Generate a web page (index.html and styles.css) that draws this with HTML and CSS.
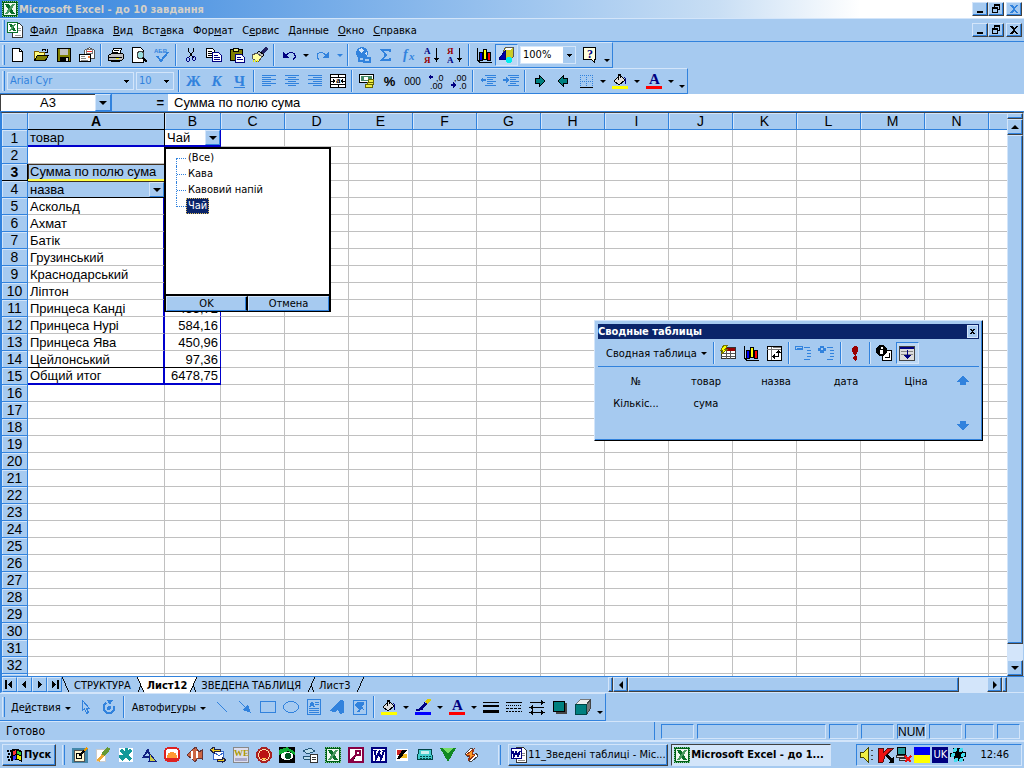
FILE: index.html
```html
<!DOCTYPE html>
<html lang="uk">

<head>
    <meta charset="UTF-8">
    <meta name="viewport" content="width=device-width, initial-scale=1.0">
    <title>Microsoft Excel - до 10 завдання</title>
    <link rel="stylesheet" href="styles.css">
</head>

<body>

    <!-- Icon sprite -->
    <svg class="sprite">
        <symbol id="excel" viewBox="0 0 16 16"><path fill="#006018" d="M0 0h16v16H0z"/><path fill="none" stroke="#8c9" stroke-dasharray="1" d="M.5.500h15v15H.5z"/><path fill="#f0f8f0" d="M2 2h12v12H2z"/><path fill="#087028" d="M3 3h4l6 10H9z"/><path fill="#4a9a60" d="M10 3h3L6 13H3z"/></symbol>
        <symbol id="book" viewBox="0 0 16 16"><path fill="#fff" stroke="#333" d="M5.500 1.500h7l3 3v11h-10z"/><path stroke="#999" d="M11 6.500h3M11 8.500h3M8 13.500h6"/><path fill="#fff" stroke="#087028" d="M.5.500h10v10H.5z"/><path fill="#087028" d="M2 2h3l4 7H6z"/><path fill="#4a9a60" d="M7 2h2L4 9H2z"/></symbol>
        <symbol id="word" viewBox="0 0 16 16"><path fill="#fff" stroke="#000080" stroke-width="2" d="M1 1h14v14H1z"/><path fill="none" stroke="#000080" stroke-width="2" d="M4 4l1 8 3-7 2 7 3-8"/><path stroke="#000080" d="M2 3.500h4M7 4.500h3M11 3.500h3"/></symbol>
        <symbol id="worddoc" viewBox="0 0 16 16"><path fill="#fff" stroke="#333" d="M5.500.500h7l3 3v12h-10z"/><path stroke="#888" d="M11 6.500h3M11 8.500h3M7 13.500h7"/><path fill="#fff" stroke="#000080" d="M.5 1.500h10v10H.5z"/><path fill="none" stroke="#000080" stroke-width="2" d="M2 4l1 5 2-4 2 4 2-5"/></symbol>
        <symbol id="new" viewBox="0 0 16 16"><path fill="#fff" stroke="#000" d="M2.500 1.500h7l3 3v10h-10z"/><path fill="none" stroke="#000" d="M9.500 1.500v3h3"/></symbol>
        <symbol id="open" viewBox="0 0 16 16"><path fill="#ffff80" stroke="#806000" d="M1.500 13.500v-9h4l1 1h5v3"/><path fill="#808000" stroke="#000" d="M1.500 13.500l3-5h11l-3 5z"/><path fill="none" stroke="#000" d="M9 3.500q2-3 4 0M14.500 2v3h-3"/></symbol>
        <symbol id="save" viewBox="0 0 16 16"><path fill="#808000" stroke="#000" d="M1.500 1.500h13v13h-13z"/><path fill="#c0c0c0" d="M4 2h8v6H4z"/><path d="M4 10h9v4H4z"/><path fill="#ddd" d="M10 11h2v3h-2z"/></symbol>
        <symbol id="mail" viewBox="0 0 16 16"><path fill="#fff" stroke="#555" d="M5.500 9.500v-6l5-3 5 3v8h-4z"/><path fill="#fff" stroke="#777" d="M7.500 2.500h6v4h-6z"/><path stroke="#e33" d="M8 4.500h5"/><path fill="#fff" stroke="#000" d="M.5 7.500h11v7H.5z"/><path stroke="#888" d="M2 9.500h4M2 11.500h5M2 13.500h7"/><path fill="#f08040" d="M9 9h2v2H9z"/></symbol>
        <symbol id="print" viewBox="0 0 16 16"><path fill="#fff" stroke="#000" d="M5.500 1.500h8l-2 6h-8z"/><path stroke="#000" d="M6 3.500h5M5 5.500h5"/><path fill="#c0c0c0" stroke="#000" d="M.5 8.500l3-2h11l1 1v4l-2 2h-13z"/><path stroke="#000" d="M1 10.500h13M3 14.500h9"/><path fill="#ee0" d="M8 11h3v1H8z"/></symbol>
        <symbol id="preview" viewBox="0 0 16 16"><path fill="#fff" stroke="#000" d="M1.500.500h8l3 3v12h-11z"/><circle cx="9.500" cy="8" r="3.500" fill="#9dd" stroke="#444"/><path stroke="#000" stroke-width="2" d="M12 11l4 4"/></symbol>
        <symbol id="spell" viewBox="0 0 16 16"><text x="0" y="6" class="glyph tiny" fill="#3182dd">АБВ</text><path fill="none" stroke="#3182dd" stroke-width="2" d="M3 9l4 5 7-9"/></symbol>
        <symbol id="cut" viewBox="0 0 16 16"><path fill="none" stroke="#000" d="M5.500 1v3l5 7M10.500 1v3l-5 7"/><path fill="none" stroke="#000080" d="M3.500 11.500l1-1h1l1 1v2l-1 1h-1l-1-1zM9.500 10.500l1-1h1l1 1v2l-1 1h-1l-1-1z"/></symbol>
        <symbol id="copy" viewBox="0 0 16 16"><path fill="#fff" stroke="#000" d="M.5 1.500h6l2 2v7h-8z"/><path stroke="#000" d="M2 4.500h4M2 6.500h4M2 8.500h4"/><path fill="#fff" stroke="#000080" d="M6.500 5.500h6l3 3v6h-9z"/><path stroke="#000080" d="M8 8.500h4M8 10.500h6M8 12.500h6"/></symbol>
        <symbol id="paste" viewBox="0 0 16 16"><path fill="#808000" stroke="#000" d="M1.500 2.500h12v11h-12z"/><path fill="#ee8" stroke="#000" d="M4.500 1.500h5v3h-5z"/><path fill="#fff" stroke="#000080" d="M6.500 7.500h6l3 3v5h-9z"/><path stroke="#000080" d="M8 10.500h4M8 12.500h6"/></symbol>
        <symbol id="brush" viewBox="0 0 16 16"><path stroke="#202060" stroke-width="3" d="M15 1l-5 5"/><path fill="#c0c0c0" stroke="#000" d="M7 4l5 4-2 2-5-4z"/><path fill="#ffffa0" stroke="#555" d="M5 6l5 4-4 5-5-3-1-4z"/><path stroke="#ee0" stroke-width="2" stroke-dasharray="1" d="M1 14h6"/></symbol>
        <symbol id="undo" viewBox="0 0 16 16"><path fill="none" stroke="#000080" d="M5 8.500l2-2 2-1h2l2 1 1 2v2l-2 2"/><path fill="#000080" d="M2 4v7h6z"/></symbol>
        <symbol id="redo" viewBox="0 0 16 16"><path fill="none" stroke="#3182dd" d="M11 8.500l-2-2-2-1H5l-2 1-1 2v2l2 2"/><path fill="#3182dd" d="M14 4v7H8z"/></symbol>
        <symbol id="link" viewBox="0 0 16 16"><circle cx="7" cy="6" r="6" fill="#3182dd"/><path fill="#d3e5fa" d="M3 3l4-2 2 3-3 2zM9 6l3-1v3z"/><path fill="#a6caf0" stroke="#3182dd" stroke-width="2" d="M4 10h5v4H4zM9 11h6v4H9z"/></symbol>
        <symbol id="sigma" viewBox="0 0 16 16"><path fill="none" stroke="#3182dd" stroke-width="2" d="M12 5V3H4l4 5-4 5h8v-2"/></symbol>
        <symbol id="fx" viewBox="0 0 16 16"><text x="2" y="12" class="glyph italic" fill="#3182dd">f</text><text x="8" y="13" class="glyph italic-small" fill="#3182dd">x</text></symbol>
        <symbol id="sortaz" viewBox="0 0 16 16"><text x="0" y="7" class="glyph small" fill="#000080">А</text><text x="0" y="16" class="glyph small" fill="#900">Я</text><path stroke="#000" d="M12.500 1v12"/><path d="M10 11h5l-2.500 4z"/></symbol>
        <symbol id="sortza" viewBox="0 0 16 16"><text x="0" y="7" class="glyph small" fill="#900">Я</text><text x="0" y="16" class="glyph small" fill="#000080">А</text><path stroke="#000" d="M12.500 1v12"/><path d="M10 11h5l-2.500 4z"/></symbol>
        <symbol id="chart" viewBox="0 0 16 16"><path fill="none" stroke="#000" d="M1.500 1v12l2 2h12"/><path fill="#00f" stroke="#000" d="M3.500 5.500h3v8h-3z"/><path fill="#ff0" stroke="#000" d="M7.500 2.500h3v10h-3z"/><path fill="#f00" stroke="#000" d="M11.500 5.500h3v8h-3z"/></symbol>
        <symbol id="draw" viewBox="0 0 16 16"><path fill="#cc2" stroke="#555" d="M4.500 3.500l2-3h8v9l-2 2h-8z"/><path fill="#fff" d="M5 3l2-2h6l-1 2z"/><path fill="#00a" stroke="#000080" d="M0 12l6-8v8z"/><circle cx="10" cy="13" r="3" fill="#0ee"/></symbol>
        <symbol id="help" viewBox="0 0 16 16"><path fill="#ffffe0" stroke="#000" d="M1.500.500h12v12h-1v3l-3-3h-8z"/><text x="5" y="11" class="glyph question" fill="#000080">?</text></symbol>
        <symbol id="left" viewBox="0 0 16 16"><path stroke="#3182dd" d="M1 2.500h14M1 4.500h9M1 6.500h14M1 8.500h9M1 10.500h14M1 12.500h9"/></symbol>
        <symbol id="center" viewBox="0 0 16 16"><path stroke="#3182dd" d="M1 2.500h14M4 4.500h8M1 6.500h14M4 8.500h8M1 10.500h14M4 12.500h8"/></symbol>
        <symbol id="right" viewBox="0 0 16 16"><path stroke="#3182dd" d="M1 2.500h14M6 4.500h9M1 6.500h14M6 8.500h9M1 10.500h14M6 12.500h9"/></symbol>
        <symbol id="merge" viewBox="0 0 16 16"><path fill="#fff" stroke="#000" d="M.5 1.500h15v13H.5z"/><path fill="none" stroke="#000" d="M0 4.500h16M0 11.500h16M8.500 1v3M8.500 12v3M1 8h4M11 8h4"/><path d="M3 6l3 2-3 2zM13 6l-3 2 3 2z"/><text x="6" y="10" class="glyph small" fill="#000">a</text></symbol>
        <symbol id="money" viewBox="0 0 16 16"><path fill="#fff" stroke="#000" d="M.5 1.500h14v8H.5z"/><path fill="#486" d="M2 3h11v5H2z"/><circle cx="7" cy="5.500" r="2" fill="#fff"/><path fill="#ee4" stroke="#660" d="M9.500 6.500h5v3h-5zM8.500 9.500h6v2h-6zM6.500 11.500h7v3h-7z"/></symbol>
        <symbol id="decinc" viewBox="0 0 16 16"><path fill="#000080" d="M0 4l3-3v2h2v2H3v2z"/><text x="8" y="8" class="glyph digits" fill="#000">,0</text><text x="2" y="16" class="glyph digits" fill="#000">,00</text></symbol>
        <symbol id="decdec" viewBox="0 0 16 16"><text x="3" y="8" class="glyph digits" fill="#000">,00</text><text x="8" y="16" class="glyph digits" fill="#000">,0</text><path fill="#000080" d="M5 12L2 9v2H0v2h2v2z"/></symbol>
        <symbol id="outdent" viewBox="0 0 16 16"><path stroke="#3182dd" d="M5 2.500h11M7 4.500h9M7 6.500h6M7 8.500h9M7 10.500h6M5 12.500h11"/><path fill="#3182dd" d="M0 7l3-3v2h3v2H3v2z"/></symbol>
        <symbol id="indent" viewBox="0 0 16 16"><path stroke="#3182dd" d="M5 2.500h11M7 4.500h9M7 6.500h6M7 8.500h9M7 10.500h6M5 12.500h11"/><path fill="#3182dd" d="M6 7L3 4v2H0v2h3v2z"/></symbol>
        <symbol id="fwd" viewBox="0 0 16 16"><path fill="#008080" stroke="#000" d="M3.500 5.500h4v-3L13 8l-5.500 5.500v-3h-4z"/></symbol>
        <symbol id="back" viewBox="0 0 16 16"><path fill="#008080" stroke="#000" d="M12.500 5.500h-4v-3L3 8l5.500 5.500v-3h4z"/></symbol>
        <symbol id="borders" viewBox="0 0 16 16"><path fill="none" stroke="#3182dd" stroke-dasharray="1" d="M2.500 2v12M8.500 2v12M14.500 2v12M2 2.500h13M2 8.500h13"/><path stroke="#000" d="M2 14.500h13"/></symbol>
        <symbol id="fill" viewBox="0 0 16 16"><path fill="#ddd" stroke="#000" d="M2 8l6-6 5 5-6 5z"/><path fill="none" stroke="#000" d="M6.500 7V1.500h2V5"/><path fill="#000080" d="M10 3q6 1 4 8-2-1-1-5z"/><path fill="#ff0" d="M0 13h16v3H0z"/></symbol>
        <symbol id="pen" viewBox="0 0 16 16"><path stroke="#000080" stroke-width="3" d="M11 4l-5 6"/><path stroke="#dc0" stroke-width="3" d="M15 0l-4 4"/><path fill="none" stroke="#000080" stroke-width="2" d="M1 11h3l3-2"/><path fill="#00f" d="M0 13h16v3H0z"/></symbol>
        <symbol id="fontcolor" viewBox="0 0 16 16"><text x="3" y="11" class="glyph big" fill="#000080">A</text><path fill="#f00" d="M0 13h16v3H0z"/></symbol>
        <symbol id="pivot" viewBox="0 0 16 16"><path fill="#fff" stroke="#333" d="M1.500 5.500l3-3h11v11h-14z"/><path fill="#900" d="M6 3h9v3H6z"/><path stroke="#555" d="M1 8.500h14M1 11.500h14M6.500 6v8M10.500 6v8"/><path fill="#ff0" stroke="#770" d="M4 0h4L5 4h3l-7 5 2-4H1z"/></symbol>
        <symbol id="layout" viewBox="0 0 16 16"><path fill="#fff" stroke="#000" d="M1.500 1.500h14v14h-14z"/><path stroke="#777" d="M1 4.500h14M5.500 2v13M7 2.500h8"/><path fill="none" stroke="#000" d="M7.500 11.500h5V6"/><path d="M6 11.500l3-3v6zM12.500 5l-3 3h6z"/></symbol>
        <symbol id="hide" viewBox="0 0 16 16"><path fill="none" stroke="#3182dd" d="M.5 1.500h7v3h-7zM2 3.500h5M9 2.500h6M11.500 5.500h4M11.500 8.500h4M11.500 11.500h4M9 14.500h6"/></symbol>
        <symbol id="show" viewBox="0 0 16 16"><path fill="none" stroke="#3182dd" d="M9 2.500h6M11.500 5.500h4M11.500 8.500h4M11.500 11.500h4M9 14.500h6"/><path fill="#3182dd" d="M0 3h2V1h4v2h2v3H6v2H2V6H0z"/><path fill="#a6caf0" d="M3 3h2v2H3z"/></symbol>
        <symbol id="refresh" viewBox="0 0 16 16"><path fill="#900" d="M5 3l2-2h2l2 2v3l-2 4H7L5 6zM6 12l2-2 2 2v2l-2 2-2-2z"/></symbol>
        <symbol id="field" viewBox="0 0 16 16"><path fill="#fff" stroke="#000" d="M6.500 5.500h9v10h-9z"/><path fill="none" stroke="#000" d="M9 12.500h4V8"/><circle cx="5.500" cy="5.500" r="5.500"/><path fill="#fff" d="M5 2h2v2H5zM4 5h3v4H4z"/></symbol>
        <symbol id="fields" viewBox="0 0 16 16"><path fill="#ddd" stroke="#444" d="M.5 1.500h15v14H.5z"/><path fill="#000080" d="M1 2h14v2H1z"/><path stroke="#888" d="M2 6.500h12M2 9.500h12"/><path stroke="#000080" d="M8.500 5v8"/><path fill="#000080" d="M5 10h7l-3.500 4z"/></symbol>
        <symbol id="pointer" viewBox="0 0 16 16"><path fill="none" stroke="#3182dd" d="M4.500 1.500v10l2-2 2 5 2-1-2-4h3z"/></symbol>
        <symbol id="rotate" viewBox="0 0 16 16"><path fill="none" stroke="#3182dd" stroke-width="2" d="M5 4L3 6v5l3 3h4l3-3V7"/><circle cx="8" cy="9" r="2" fill="#3182dd"/><path fill="#3182dd" d="M6 1h6l-3 5z"/></symbol>
        <symbol id="line" viewBox="0 0 16 16"><path stroke="#3182dd" d="M3 3l10 10"/></symbol>
        <symbol id="arrow" viewBox="0 0 16 16"><path stroke="#3182dd" d="M2 2l8 8"/><path fill="#3182dd" d="M14 14L6 11l5-6z"/></symbol>
        <symbol id="rect" viewBox="0 0 16 16"><path fill="none" stroke="#3182dd" d="M.5 2.500h15v11H.5z"/></symbol>
        <symbol id="oval" viewBox="0 0 16 16"><ellipse cx="8" cy="8" rx="7.500" ry="5.500" fill="none" stroke="#3182dd"/></symbol>
        <symbol id="textbox" viewBox="0 0 16 16"><path fill="none" stroke="#3182dd" d="M1.500.500h13v15h-13zM9 3.500h4M9 5.500h4M3 9.500h10M3 11.500h10M3 13.500h10"/><path fill="#3182dd" d="M3 8l2-5h2l2 5H7V7H5v1z"/></symbol>
        <symbol id="wordart" viewBox="0 0 16 16"><path fill="#3182dd" d="M0 12L12 1l3 1v12l-4 1-2-4-3 2z"/></symbol>
        <symbol id="clipart" viewBox="0 0 16 16"><path fill="none" stroke="#3182dd" d="M1.500 1.500h13v14h-13z"/><path fill="#3182dd" d="M3 5l3-2h6v3l-2 1 2 4-3-1-1 3H4l3-3-4-3z"/></symbol>
        <symbol id="weight" viewBox="0 0 16 16"><path d="M0 3h16v1H0zM0 6h16v2H0zM0 11h16v3H0z"/></symbol>
        <symbol id="dash" viewBox="0 0 16 16"><path stroke="#000" d="M0 3.500h16"/><path stroke="#000" stroke-dasharray="1" d="M0 6.500h16"/><path stroke="#000" stroke-dasharray="3 1" d="M0 9.500h16"/><path stroke="#000" stroke-dasharray="2 1" d="M0 12.500h16"/></symbol>
        <symbol id="arrows" viewBox="0 0 16 16"><path stroke="#000" d="M1 3.500h14M1 8.500h14M1 13.500h14"/><path d="M16 3.500L12 1v5zM0 8.500L4 6v5zM16 13.500L12 11v5zM0 13.500L4 11v5z"/></symbol>
        <symbol id="shadow" viewBox="0 0 16 16"><path fill="#444" d="M4 4h11v11H4z"/><path fill="#008080" stroke="#000" d="M1.500 2.500h11v10h-11z"/></symbol>
        <symbol id="cube" viewBox="0 0 16 16"><path fill="#eee" stroke="#777" d="M.5 5.500l5-5h10l-4 5z"/><path fill="#777" stroke="#444" d="M11.500 5.500l4-5v9l-4 6z"/><path fill="#008080" stroke="#044" d="M.5 5.500h11v10H.5z"/></symbol>
        <symbol id="flag" viewBox="0 0 16 14"><path stroke="#000" stroke-width="2" stroke-dasharray="2 1" d="M0 3h5M1 6h5M0 9h5M1 12h5"/><path d="M4 2q5-3 11 1v11q-6-4-11-1z"/><path fill="#f33" d="M6 3l3-1v4l-3 1z"/><path fill="#3c3" d="M10 3l4 1v3l-4-1z"/><path fill="#33f" d="M6 8l3-1v4l-3 1z"/><path fill="#ee0" d="M10 7l4 1v4l-4-1z"/></symbol>
        <symbol id="q-desk" viewBox="0 0 16 16"><path fill="#48a" d="M0 1h16v15H0z"/><path fill="#fff8d0" stroke="#555" d="M2.500 3.500h10v11h-10z"/><circle cx="7" cy="9" r="3" fill="none" stroke="#000"/><path stroke="#000" stroke-width="2" d="M13 3L7 9"/><path stroke="#e90" stroke-width="2" d="M15 1l-3 3"/></symbol>
        <symbol id="q-paint" viewBox="0 0 16 16"><path fill="#fff" stroke="#ccc" d="M1.500 2.500h9v12h-9z"/><path stroke="#693" stroke-width="4" d="M14 1L8 8"/><path stroke="#ea3" stroke-width="3" d="M8 8l-5 6"/></symbol>
        <symbol id="q-flower" viewBox="0 0 16 16"><path fill="#fff" d="M1 1h14v14H1z"/><path stroke="#199" stroke-width="3" d="M3 3l10 10M13 3L3 13M8 1v6M1 9h7"/></symbol>
        <symbol id="q-tri" viewBox="0 0 16 16"><path fill="#112080" d="M1 11L7 1l4 10z"/><path fill="#a6caf0" d="M4 9l3-4 1 4z"/><path fill="#cc4" stroke="#112080" d="M8 14l1-7 6 7z"/></symbol>
        <symbol id="q-disk" viewBox="0 0 16 16"><rect x="1" y="1" width="14" height="13" rx="4" fill="#fff" stroke="#d22" stroke-width="2"/><path fill="#f93" d="M3 11q0-6 5-6t5 6z"/><path fill="#d22" d="M1 11h14v3H1z"/></symbol>
        <symbol id="q-fish" viewBox="0 0 16 16"><path fill="#c64" stroke="#633" d="M0 8l5-5 4-3 3 5 3-2v9l-4-1-3 4-3-3z"/><path stroke="#fff" stroke-width="2" d="M5 4v8M10 4v7"/></symbol>
        <symbol id="q-mail" viewBox="0 0 16 16"><path fill="#fff" stroke="#36c" d="M3.500 4.500h10v8h-10z"/><path fill="none" stroke="#36c" d="M4 5l5 4 5-4"/><path fill="#ec2" stroke="#224" d="M0 3l4-3v2h6v2H4v2zM16 13l-4-3v2H7v2h5v2z"/></symbol>
        <symbol id="q-we" viewBox="0 0 16 16"><path fill="#dde" stroke="#888" d="M.5.500h15v15H.5z"/><text x="1" y="9" class="glyph small" fill="#a90">WE</text><path fill="#aac" d="M2 11h12v3H2z"/></symbol>
        <symbol id="q-red" viewBox="0 0 16 16"><circle cx="8" cy="8" r="7" fill="#fda" stroke="#a22" stroke-width="2"/><circle cx="8" cy="8" r="5" fill="#b11"/><path fill="#fc5" d="M5 11h6l-3 2z"/></symbol>
        <symbol id="q-eye" viewBox="0 0 16 16"><path d="M0 0h16v16H0z"/><path fill="#1a3" d="M0 3l8-3 8 5v3L9 4 0 8z"/><ellipse cx="8" cy="9" rx="6" ry="4" fill="#fff"/><circle cx="9" cy="9" r="3" fill="#052"/></symbol>
        <symbol id="q-scan" viewBox="0 0 16 16"><path fill="#bde" stroke="#257" d="M1 4l7-3 5 3-7 3zM1 9h10v3H2z"/><path fill="#fff" stroke="#333" d="M8.500 7.500h7v8h-7z"/><path stroke="#333" d="M10 10.500h4M10 12.500h4"/></symbol>
        <symbol id="q-key" viewBox="0 0 16 16"><path fill="#fff" stroke="#804" stroke-width="2" d="M1 1h14v14H1z"/><circle cx="10" cy="6" r="2.500" fill="#fff" stroke="#804" stroke-width="2"/><path stroke="#804" stroke-width="2" d="M8 8l-5 5h3"/></symbol>
        <symbol id="q-photo" viewBox="0 0 16 16"><path fill="#fff" d="M2 2h12v12H2z"/><path fill="#c22" d="M3 3h5v5H3z"/><path fill="#eb2" d="M8 7h5v4H3z"/><path d="M8 3h5L6 12H3z"/></symbol>
        <symbol id="q-modem" viewBox="0 0 16 16"><path fill="#4cc" stroke="#044" d="M1.500 2.500h13l1 10h-15z"/><path fill="#cee" d="M4 4h8v3H4z"/><path stroke="#044" stroke-dasharray="2 1" d="M3 9.500h11M3 11.500h11"/></symbol>
        <symbol id="q-down" viewBox="0 0 16 16"><path fill="#182" d="M0 1h16L8 15z"/><path fill="#7d6" d="M2 1h12L8 6z"/></symbol>
        <symbol id="q-bolt" viewBox="0 0 16 16"><path fill="#fff" stroke="#444" d="M2 7l6-6 3 2-6 7zM6 14l7-8 2 3-7 6z"/><path fill="#f92" stroke="#931" d="M8 4l3-2-2 5 3 1-7 6 2-5-4-1z"/></symbol>
        <symbol id="t-sound" viewBox="0 0 16 16"><path fill="#ee4" stroke="#440" d="M.5 5.500h3l5-5v15l-5-5h-3z"/><path stroke="#444" stroke-dasharray="2 2" d="M11 4l3-2M11 8h4M11 12l3 2"/></symbol>
        <symbol id="t-kasp" viewBox="0 0 16 16"><path fill="#e11" stroke="#511" d="M0 1h5v5l5-5h6L7 9l-2 6H0z"/><path d="M7 9l3-2 3 4 3-1v6h-6l2-2z"/></symbol>
        <symbol id="t-net" viewBox="0 0 16 16"><path fill="#299" stroke="#000" d="M1.500.500h8v7h-8z"/><path fill="#ddd" stroke="#333" d="M.5 8.500h10v2H.5zM3.500 11.500h8v2h-8z"/><path stroke="#e11" stroke-width="2" d="M9 9l6 6M15 9l-6 6"/></symbol>
        <symbol id="t-ua" viewBox="0 0 16 16"><path fill="#00e" d="M0 0h16v8H0z"/><path fill="#ff0" d="M0 8h16v8H0z"/></symbol>
        <symbol id="t-icq" viewBox="0 0 16 16"><path d="M3 1h10v4h3v5h-3l1 4H4v-4H0V6h3z"/><g fill="#4de"><circle cx="5" cy="3" r="2"/><circle cx="11" cy="3" r="2"/><circle cx="3" cy="8" r="2"/><circle cx="13" cy="8" r="2"/><circle cx="6" cy="13" r="2"/><circle cx="11" cy="13" r="2"/></g></symbol>
        <symbol id="min" viewBox="0 0 10 10"><path d="M2 7h6v2H2z"/></symbol>
        <symbol id="restore" viewBox="0 0 10 10"><path fill="none" stroke="#000" d="M3.500 3V.5h5v5H7M3 1.500h6M1.500 3.500h5v5h-5zM1 4.500h6"/></symbol>
        <symbol id="close" viewBox="0 0 10 10"><path fill="currentColor" d="M1 1h2l2 2 2-2h2L6 5l3 4H7L5 7 3 9H1l3-4z"/></symbol>
    </svg>

    <div class="app">
        <header class="titlebar">
            <svg class="icon"><use href="#excel"/></svg>
            <h1>Microsoft Excel - до 10 завдання</h1>
            <div class="winbtns">
                <button aria-label="Свернуть"><svg><use href="#min"/></svg></button>
                <button aria-label="Восстановить"><svg><use href="#restore"/></svg></button>
                <button class="last off" aria-label="Закрыть"><svg><use href="#close"/></svg></button>
            </div>
        </header>

        <nav class="menubar">
            <span class="grip"></span>
            <svg class="icon"><use href="#book"/></svg>
            <button><u>Ф</u>айл</button>
            <button><u>П</u>равка</button>
            <button><u>В</u>ид</button>
            <button>Вст<u>а</u>вка</button>
            <button>Фор<u>м</u>ат</button>
            <button>С<u>е</u>рвис</button>
            <button><u>Д</u>анные</button>
            <button><u>О</u>кно</button>
            <button><u>С</u>правка</button>
            <div class="winbtns">
                <button aria-label="Свернуть окно"><svg><use href="#min"/></svg></button>
                <button aria-label="Восстановить окно"><svg><use href="#restore"/></svg></button>
                <button class="last" aria-label="Закрыть окно"><svg><use href="#close"/></svg></button>
            </div>
        </nav>

        <div class="toolbar">
            <span class="grip"></span>
            <button class="tool" aria-label="Создать"><svg class="icon"><use href="#new"/></svg></button>
            <button class="tool" aria-label="Открыть"><svg class="icon"><use href="#open"/></svg></button>
            <button class="tool" aria-label="Сохранить"><svg class="icon"><use href="#save"/></svg></button>
            <button class="tool" aria-label="Сообщение"><svg class="icon"><use href="#mail"/></svg></button>
            <span class="sep"></span>
            <button class="tool" aria-label="Печать"><svg class="icon"><use href="#print"/></svg></button>
            <button class="tool" aria-label="Просмотр"><svg class="icon"><use href="#preview"/></svg></button>
            <button class="tool" aria-label="Орфография"><svg class="icon"><use href="#spell"/></svg></button>
            <span class="sep"></span>
            <button class="tool" aria-label="Вырезать"><svg class="icon"><use href="#cut"/></svg></button>
            <button class="tool" aria-label="Копировать"><svg class="icon"><use href="#copy"/></svg></button>
            <button class="tool" aria-label="Вставить"><svg class="icon"><use href="#paste"/></svg></button>
            <button class="tool" aria-label="Формат по образцу"><svg class="icon"><use href="#brush"/></svg></button>
            <span class="sep"></span>
            <button class="tool" aria-label="Отменить"><svg class="icon"><use href="#undo"/></svg></button>
            <button class="drop" aria-label="Список отмены"></button>
            <button class="tool" aria-label="Вернуть"><svg class="icon"><use href="#redo"/></svg></button>
            <button class="drop off" aria-label="Список возврата"></button>
            <span class="sep"></span>
            <button class="tool" aria-label="Гиперссылка"><svg class="icon"><use href="#link"/></svg></button>
            <button class="tool" aria-label="Автосумма"><svg class="icon"><use href="#sigma"/></svg></button>
            <button class="tool" aria-label="Функция"><svg class="icon"><use href="#fx"/></svg></button>
            <button class="tool" aria-label="По возрастанию"><svg class="icon"><use href="#sortaz"/></svg></button>
            <button class="tool" aria-label="По убыванию"><svg class="icon"><use href="#sortza"/></svg></button>
            <span class="sep"></span>
            <button class="tool" aria-label="Диаграмма"><svg class="icon"><use href="#chart"/></svg></button>
            <button class="tool pressed" aria-label="Рисование"><svg class="icon"><use href="#draw"/></svg></button>
            <select class="combo zoom" aria-label="Масштаб"><option>100%</option></select>
            <button class="tool" aria-label="Справка"><svg class="icon"><use href="#help"/></svg></button>
            <button class="drop more" aria-label="Другие кнопки"></button>
        </div>

        <div class="toolbar">
            <span class="grip"></span>
            <select class="combo font" aria-label="Шрифт" disabled><option>Arial Cyr</option></select>
            <select class="combo size" aria-label="Размер" disabled><option>10</option></select>
            <span class="sep"></span>
            <button class="tool letter"><b>Ж</b></button>
            <button class="tool letter"><i>К</i></button>
            <button class="tool letter"><u>Ч</u></button>
            <span class="sep"></span>
            <button class="tool" aria-label="По левому краю"><svg class="icon"><use href="#left"/></svg></button>
            <button class="tool" aria-label="По центру"><svg class="icon"><use href="#center"/></svg></button>
            <button class="tool" aria-label="По правому краю"><svg class="icon"><use href="#right"/></svg></button>
            <button class="tool" aria-label="Объединить"><svg class="icon"><use href="#merge"/></svg></button>
            <span class="sep"></span>
            <button class="tool" aria-label="Денежный формат"><svg class="icon"><use href="#money"/></svg></button>
            <button class="tool percent">%</button>
            <button class="tool zeros">000</button>
            <button class="tool" aria-label="Увеличить разрядность"><svg class="icon"><use href="#decinc"/></svg></button>
            <button class="tool" aria-label="Уменьшить разрядность"><svg class="icon"><use href="#decdec"/></svg></button>
            <span class="sep"></span>
            <button class="tool" aria-label="Уменьшить отступ"><svg class="icon"><use href="#outdent"/></svg></button>
            <button class="tool" aria-label="Увеличить отступ"><svg class="icon"><use href="#indent"/></svg></button>
            <span class="sep"></span>
            <button class="tool" aria-label="Вперед"><svg class="icon"><use href="#fwd"/></svg></button>
            <button class="tool" aria-label="Назад"><svg class="icon"><use href="#back"/></svg></button>
            <button class="tool" aria-label="Границы"><svg class="icon"><use href="#borders"/></svg></button>
            <button class="drop" aria-label="Выбор границы"></button>
            <button class="tool" aria-label="Цвет заливки"><svg class="icon"><use href="#fill"/></svg></button>
            <button class="drop" aria-label="Выбор заливки"></button>
            <button class="tool" aria-label="Цвет шрифта"><svg class="icon"><use href="#fontcolor"/></svg></button>
            <button class="drop" aria-label="Выбор цвета"></button>
            <button class="drop more" aria-label="Другие кнопки"></button>
        </div>

        <div class="formulabar">
            <input class="namebox" aria-label="Имя" value="A3">
            <button class="pick" aria-label="Список имен"></button>
            <button class="equals">=</button>
            <input class="formula" aria-label="Формула" value="Сумма по полю сума">
        </div>

        <main class="workspace">
            <div class="sheet">
                <table>
                    <colgroup>
                        <col class="col-num">
                        <col class="col-a">
                        <col class="col-b">
                    </colgroup>
                    <thead>
                        <tr id="letters"><th></th></tr>
                    </thead>
                    <tbody id="rows">
                        <tr><th>1</th><td class="page">товар</td><td class="choice">Чай<button class="pick" aria-label="Выбрать товар"></button>
                            <div class="popup">
                                <ul>
                                    <li><span>(Все)</span></li>
                                    <li><span>Кава</span></li>
                                    <li><span>Кавовий напій</span></li>
                                    <li><span class="selected">Чай</span></li>
                                </ul>
                                <div class="popup-btns"><button class="default">OK</button><button>Отмена</button></div>
                            </div></td></tr>
                        <tr><th>2</th><td></td><td></td></tr>
                        <tr><th class="current">3</th><td class="active">Сумма по полю сума</td><td></td></tr>
                        <tr><th>4</th><td class="field">назва<button class="pick" aria-label="Выбрать назву"></button></td><td></td></tr>
                        <tr class="data"><th>5</th><td>Аскольд</td><td></td></tr>
                        <tr class="data"><th>6</th><td>Ахмат</td><td></td></tr>
                        <tr class="data"><th>7</th><td>Батік</td><td></td></tr>
                        <tr class="data"><th>8</th><td>Грузинський</td><td></td></tr>
                        <tr class="data"><th>9</th><td>Краснодарський</td><td></td></tr>
                        <tr class="data"><th>10</th><td>Ліптон</td><td></td></tr>
                        <tr class="data"><th>11</th><td>Принцеса Канді</td><td>453,72</td></tr>
                        <tr class="data"><th>12</th><td>Принцеса Нурі</td><td>584,16</td></tr>
                        <tr class="data"><th>13</th><td>Принцеса Ява</td><td>450,96</td></tr>
                        <tr class="data last"><th>14</th><td>Цейлонський</td><td>97,36</td></tr>
                        <tr class="data total"><th>15</th><td>Общий итог</td><td>6478,75</td></tr>
                    </tbody>
                </table>
            </div>
            <div class="vscroll">
                <span class="split"></span>
                <button class="up" aria-label="Вверх"></button>
                <span class="thumb"></span>
                <button class="down" aria-label="Вниз"></button>
            </div>

            <section class="palette">
                <div class="palette-title"><h2>Сводные таблицы</h2><button aria-label="Закрыть панель"><svg><use href="#close"/></svg></button></div>
                <div class="palette-tools">
                    <button class="menu"><span>Сво<u>д</u>ная таблица</span></button>
                    <span class="sep"></span>
                    <button class="tool" aria-label="Формат отчета"><svg class="icon"><use href="#pivot"/></svg></button>
                    <button class="tool" aria-label="Мастер диаграмм"><svg class="icon"><use href="#chart"/></svg></button>
                    <button class="tool" aria-label="Мастер таблиц"><svg class="icon"><use href="#layout"/></svg></button>
                    <span class="sep"></span>
                    <button class="tool" aria-label="Скрыть детали"><svg class="icon"><use href="#hide"/></svg></button>
                    <button class="tool" aria-label="Показать детали"><svg class="icon"><use href="#show"/></svg></button>
                    <span class="sep"></span>
                    <button class="tool" aria-label="Обновить данные"><svg class="icon"><use href="#refresh"/></svg></button>
                    <span class="sep"></span>
                    <button class="tool" aria-label="Параметры поля"><svg class="icon"><use href="#field"/></svg></button>
                    <button class="tool pressed" aria-label="Отобразить поля"><svg class="icon"><use href="#fields"/></svg></button>
                </div>
                <div class="palette-body">
                    <div class="fields">
                        <button>№</button><button>товар</button><button>назва</button><button>дата</button><button>Ціна</button>
                        <button>Кількіс...</button><button>сума</button>
                    </div>
                    <div class="scroll-arrows">
                        <button aria-label="Вверх"><svg viewBox="0 0 14 10"><path d="M7 0l7 6h-4v3H4V6H0z"/></svg></button>
                        <button aria-label="Вниз"><svg viewBox="0 0 14 10"><path d="M7 10L0 4h4V1h6v3h4z"/></svg></button>
                    </div>
                </div>
            </section>
        </main>

        <div class="tabbar">
            <button class="nav" aria-label="Первый лист"><svg viewBox="0 0 10 10"><path d="M0 0h2v10H0zM8 0v10L3 5z"/></svg></button>
            <button class="nav" aria-label="Предыдущий лист"><svg viewBox="0 0 10 10"><path d="M7 0v10L2 5z"/></svg></button>
            <button class="nav" aria-label="Следующий лист"><svg viewBox="0 0 10 10"><path d="M3 0v10l5-5z"/></svg></button>
            <button class="nav" aria-label="Последний лист"><svg viewBox="0 0 10 10"><path d="M8 0h2v10H8zM2 0v10l5-5z"/></svg></button>
            <div class="tabs">
                <svg class="edge" viewBox="0 0 8 16"><path d="M0 0l7 16"/></svg>
                <button>СТРУКТУРА</button>
                <svg class="edge" viewBox="0 0 8 16"><path class="paper" d="M0 0h8v16H7z"/><path d="M0 0l7 16M4 7L1 16"/></svg>
                <button class="on">Лист12</button>
                <svg class="edge" viewBox="0 0 8 16"><path class="paper" d="M0 0h8L1 16H0z"/><path d="M8 0L1 16M4 7l3 9"/></svg>
                <button>ЗВЕДЕНА ТАБЛИЦЯ</button>
                <svg class="edge" viewBox="0 0 8 16"><path d="M8 0L1 16M4 7l3 9"/></svg>
                <button>Лист3</button>
                <svg class="edge" viewBox="0 0 8 16"><path d="M8 0L1 16"/></svg>
            </div>
            <div class="hscroll">
                <span class="split"></span>
                <button class="prev" aria-label="Влево"></button>
                <span class="thumb"></span>
                <button class="next" aria-label="Вправо"></button>
                <span class="split"></span>
            </div>
        </div>

        <div class="toolbar drawing">
            <span class="grip"></span>
            <button class="menu"><span>Де<u>й</u>ствия</span></button>
            <button class="tool" aria-label="Выбор объектов"><svg class="icon"><use href="#pointer"/></svg></button>
            <button class="tool" aria-label="Вращение"><svg class="icon"><use href="#rotate"/></svg></button>
            <span class="sep"></span>
            <button class="menu"><span>Автофи<u>г</u>уры</span></button>
            <button class="tool" aria-label="Линия"><svg class="icon"><use href="#line"/></svg></button>
            <button class="tool" aria-label="Стрелка"><svg class="icon"><use href="#arrow"/></svg></button>
            <button class="tool" aria-label="Прямоугольник"><svg class="icon"><use href="#rect"/></svg></button>
            <button class="tool" aria-label="Овал"><svg class="icon"><use href="#oval"/></svg></button>
            <button class="tool" aria-label="Надпись"><svg class="icon"><use href="#textbox"/></svg></button>
            <button class="tool" aria-label="WordArt"><svg class="icon"><use href="#wordart"/></svg></button>
            <button class="tool" aria-label="Картинка"><svg class="icon"><use href="#clipart"/></svg></button>
            <span class="sep"></span>
            <button class="tool" aria-label="Заливка"><svg class="icon"><use href="#fill"/></svg></button>
            <button class="drop" aria-label="Выбор заливки фигуры"></button>
            <button class="tool" aria-label="Цвет линий"><svg class="icon"><use href="#pen"/></svg></button>
            <button class="drop" aria-label="Выбор цвета линий"></button>
            <button class="tool" aria-label="Цвет текста"><svg class="icon"><use href="#fontcolor"/></svg></button>
            <button class="drop" aria-label="Выбор цвета текста"></button>
            <button class="tool" aria-label="Тип линии"><svg class="icon"><use href="#weight"/></svg></button>
            <button class="tool" aria-label="Тип штриха"><svg class="icon"><use href="#dash"/></svg></button>
            <button class="tool" aria-label="Вид стрелки"><svg class="icon"><use href="#arrows"/></svg></button>
            <button class="tool" aria-label="Тень"><svg class="icon"><use href="#shadow"/></svg></button>
            <button class="tool" aria-label="Объем"><svg class="icon"><use href="#cube"/></svg></button>
            <button class="drop more" aria-label="Другие кнопки"></button>
        </div>

        <div class="statusbar">
            <p>Готово</p>
            <span class="w33"></span>
            <span class="w129"></span>
            <span class="w29"></span>
            <span class="w33"></span>
            <span class="w29">NUM</span>
            <span class="w33"></span>
            <span class="w29"></span>
            <span class="w23"></span>
        </div>

        <footer class="taskbar">
            <button class="start"><svg class="icon"><use href="#flag"/></svg>Пуск</button>
            <span class="grip"></span>
            <div class="quick">
                <svg class="icon"><use href="#q-desk"/></svg>
                <svg class="icon"><use href="#q-paint"/></svg>
                <svg class="icon"><use href="#q-flower"/></svg>
                <svg class="icon"><use href="#q-tri"/></svg>
                <svg class="icon"><use href="#q-disk"/></svg>
                <svg class="icon"><use href="#q-fish"/></svg>
                <svg class="icon"><use href="#q-mail"/></svg>
                <svg class="icon"><use href="#q-we"/></svg>
                <svg class="icon"><use href="#q-red"/></svg>
                <svg class="icon"><use href="#q-eye"/></svg>
                <svg class="icon"><use href="#q-scan"/></svg>
                <svg class="icon"><use href="#excel"/></svg>
                <svg class="icon"><use href="#q-key"/></svg>
                <svg class="icon"><use href="#word"/></svg>
                <svg class="icon"><use href="#q-photo"/></svg>
                <svg class="icon"><use href="#q-modem"/></svg>
                <svg class="icon"><use href="#q-down"/></svg>
                <svg class="icon"><use href="#q-bolt"/></svg>
            </div>
            <span class="grip"></span>
            <button class="task"><svg class="icon"><use href="#worddoc"/></svg><span>11_Зведені таблиці - Міс...</span></button>
            <button class="task open"><svg class="icon"><use href="#excel"/></svg><span>Microsoft Excel - до 1...</span></button>
            <div class="tray">
                <svg class="icon"><use href="#t-sound"/></svg>
                <svg class="icon"><use href="#t-kasp"/></svg>
                <svg class="icon"><use href="#t-net"/></svg>
                <svg class="icon"><use href="#t-ua"/></svg>
                <span class="lang">UK</span>
                <svg class="icon"><use href="#t-icq"/></svg>
                <time>12:46</time>
            </div>
        </footer>
    </div>

    <script src="script.js"></script>
</body>

</html>
```

FILE: styles.css
```css
* {
    box-sizing: border-box;
}

body {
    --face: #a6caf0;
    --light: #d3e5fa;
    --shade: #3182dd;
    --dark: #404040;
    --pivot: #0000cc;
    margin: 0;
    font-family: "DejaVu Sans Condensed", "DejaVu Sans", sans-serif;
    font-size: 11px;
    line-height: 14px;
    color: #000;
    background: var(--face);
}

button,
input,
select {
    margin: 0;
    padding: 0;
    border: 0;
    border-radius: 0;
    background: none;
    font: inherit;
    color: inherit;
}

h1,
h2,
p,
ul {
    margin: 0;
    padding: 0;
    list-style: none;
    font-size: 11px;
}

svg {
    display: block;
    shape-rendering: crispEdges;
}

.sprite {
    display: none;
}

.icon {
    flex: none;
    width: 16px;
    height: 16px;
}

.glyph.tiny {
    font: bold 6px "Liberation Sans", sans-serif;
}

.glyph.small {
    font: bold 9px "Liberation Serif", serif;
}

.glyph.digits {
    font: 9px "Liberation Sans", sans-serif;
}

.glyph.question {
    font: bold 12px "Liberation Serif", serif;
}

.glyph.italic {
    font: italic bold 14px "Liberation Serif", serif;
}

.glyph.italic-small {
    font: italic bold 11px "Liberation Serif", serif;
}

.glyph.big {
    font: bold 15px "Liberation Serif", serif;
}

.app {
    display: flex;
    flex-direction: column;
    height: 100vh;
    overflow: hidden;
}

/* Title and menu */

.titlebar {
    display: flex;
    flex: none;
    align-items: center;
    gap: 1px;
    height: 18px;
    padding: 0 2px;
    color: #d4d0c8;
    background: linear-gradient(90deg, #3182dd, #a6caf0 55%, #c8def4 70%, #fff 84%);
}

.titlebar h1 {
    padding-top: 1px;
}

.winbtns {
    display: flex;
    margin-left: auto;
}

.winbtns button {
    display: flex;
    align-items: center;
    justify-content: center;
    width: 16px;
    height: 14px;
    color: #000;
    background: var(--face);
    border: 1px solid var(--light);
    border-color: var(--light) var(--dark) var(--dark) var(--light);
    box-shadow: inset -1px -1px var(--shade);
}

.winbtns svg {
    width: 10px;
    height: 10px;
}

.winbtns .last {
    margin-left: 2px;
}

.winbtns .off {
    color: var(--shade);
}

.menubar {
    display: flex;
    flex: none;
    align-items: center;
    height: 24px;
    padding: 0 2px 0 0;
    border-top: 1px solid var(--light);
    border-bottom: 1px solid var(--shade);
}

.menubar > .icon {
    margin: 0 2px 0 1px;
}

.menubar > button {
    padding: 2px 4px 0 5px;
}

/* Toolbars */

.grip {
    flex: none;
    width: 3px;
    height: 20px;
    margin: 0 1px 0 2px;
    border-left: 1px solid var(--light);
    border-right: 1px solid var(--shade);
}

.toolbar {
    display: flex;
    flex: none;
    align-items: center;
    align-self: flex-start;
    height: 26px;
    border: 1px solid var(--shade);
    border-top-color: var(--light);
    border-left: 0;
}

.tool {
    display: flex;
    flex: none;
    align-items: center;
    justify-content: center;
    width: 23px;
    height: 22px;
}

.pressed {
    border: 1px solid var(--shade);
    border-right-color: var(--light);
    border-bottom-color: var(--light);
    background: #bcd8f5;
}

.sep {
    flex: none;
    width: 2px;
    height: 22px;
    margin: 0 2px;
    border-left: 1px solid var(--shade);
    border-right: 1px solid var(--light);
}

.drop {
    width: 11px;
    height: 22px;
    flex: none;
    display: flex;
    align-items: center;
    justify-content: center;
}

.drop::after,
.menu::after,
.pick::after {
    content: "";
    border: 3px solid transparent;
    border-top-color: #000;
    border-bottom: 0;
}

.drop.off::after {
    border-top-color: var(--shade);
}

.drop.more {
    align-items: flex-end;
    padding-bottom: 4px;
}

.menu {
    display: flex;
    align-items: center;
    gap: 4px;
    padding: 2px 4px 0 5px;
}

.combo {
    appearance: none;
    height: 18px;
    padding: 0 2px;
    line-height: 14px;
    border: 1px solid var(--light);
    background: linear-gradient(#000, #000) no-repeat right 4px top 7px / 5px 1px,
        linear-gradient(#000, #000) no-repeat right 5px top 8px / 3px 1px,
        linear-gradient(#000, #000) no-repeat right 6px top 9px / 1px 1px;
}

.combo:disabled {
    color: var(--shade);
    opacity: 1;
}

.combo.font {
    width: 127px;
    margin-left: 1px;
}

.combo.size {
    width: 38px;
    margin: 0 2px;
}

.combo.zoom {
    width: 56px;
    margin: 0 2px;
    background: linear-gradient(#000, #000) no-repeat right 3px top 7px / 5px 1px,
        linear-gradient(#000, #000) no-repeat right 4px top 8px / 3px 1px,
        linear-gradient(#000, #000) no-repeat right 5px top 9px / 1px 1px,
        linear-gradient(90deg, #fff 42px, var(--face) 42px);
}

.letter {
    font: bold 15px "Liberation Serif", serif;
    color: var(--shade);
}

.percent {
    font: bold 13px "Liberation Sans", sans-serif;
}

.zeros {
    font: 10px "Liberation Sans", sans-serif;
}

/* Formula bar */

.formulabar {
    display: flex;
    flex: none;
    height: 18px;
    border-bottom: 1px solid var(--shade);
    font-family: "Liberation Sans", sans-serif;
    font-size: 13px;
}

.namebox {
    width: 95px;
    text-align: center;
    background: #fff;
    border-top: 1px solid var(--dark);
    border-left: 1px solid var(--dark);
}

.pick {
    display: flex;
    flex: none;
    align-items: center;
    justify-content: center;
    width: 16px;
    background: var(--face);
    border: 1px solid var(--light);
    border-color: var(--light) var(--shade) var(--shade) var(--light);
}

.pick::after {
    border-width: 4px;
    border-bottom: 0;
}

.equals {
    width: 57px;
    padding-right: 4px;
    text-align: right;
    font-weight: bold;
    border-left: 1px solid var(--shade);
}

.formula {
    flex: 1;
    padding: 0 6px;
    background: #fff;
}

/* Sheet */

.workspace {
    display: flex;
    flex: 1 1 0;
    min-height: 0;
    position: relative;
    border-top: 1px solid var(--dark);
    border-right: 1px solid var(--face);
    border-left: 2px solid var(--shade);
}

.sheet {
    flex: 1;
    min-width: 0;
    overflow: hidden;
    background: #fff;
    font-family: "Liberation Sans", sans-serif;
    font-size: 13px;
    line-height: 14px;
}

table {
    width: 0;
    table-layout: fixed;
    border-collapse: separate;
    border-spacing: 0;
}

col {
    width: 64px;
}

.col-num {
    width: 26px;
}

.col-a {
    width: 137px;
}

.col-b {
    width: 56px;
}

tr {
    height: 17px;
}

th {
    height: 17px;
    padding: 0;
    font-size: 14px;
    line-height: 16px;
    font-weight: normal;
    background: var(--face);
    border-right: 1px solid var(--shade);
    border-bottom: 1px solid var(--shade);
    box-shadow: inset 1px 1px var(--light);
}

th.current {
    font-weight: bold;
    border-color: #000;
}

td {
    height: 17px;
    padding: 2px 2px 0;
    white-space: nowrap;
    background: #fff;
    border-right: 1px solid #c0c0c0;
    border-bottom: 1px solid #c0c0c0;
}

.page,
.field,
.active {
    position: relative;
    background: var(--face);
}

.page,
.choice,
.active,
.field,
.data.total td:nth-child(-n+3) {
    padding-top: 1px;
}

.page {
    border-right-color: #000;
    border-bottom: 2px solid var(--pivot);
}

.choice {
    position: relative;
    border-right-color: var(--pivot);
    border-bottom: 2px solid var(--pivot);
}

td .pick {
    position: absolute;
    top: 0;
    right: 0;
    width: 15px;
    height: 15px;
}

.active {
    border-color: #ffff40;
    border-bottom-width: 2px;
    box-shadow: inset 1px 1px #403020;
}

.field {
    border-color: #000;
    border-right-color: var(--pivot);
    border-top: 1px solid #403020;
}

.data td:nth-child(2) {
    border-right: 2px solid var(--pivot);
}

.data td:nth-child(3) {
    text-align: right;
    border-right-color: var(--pivot);
}

.data.last td:nth-child(-n+3) {
    border-bottom-color: #000;
}

.data.total td:nth-child(-n+3) {
    border-bottom: 2px solid var(--pivot);
}

/* List dropped from B1 */

.popup {
    position: absolute;
    z-index: 2;
    top: 17px;
    left: -1px;
    width: 167px;
    border: 2px solid #000;
    border-bottom-width: 1px;
    background: #fff;
    font-family: "DejaVu Sans Condensed", "DejaVu Sans", sans-serif;
    font-size: 11px;
    text-align: left;
}

.popup ul {
    height: 145px;
    padding: 1px 0 0 10px;
}

.popup li {
    display: flex;
    align-items: center;
    height: 16px;
}

.popup li::before {
    content: "";
    width: 9px;
    height: 16px;
    border-left: 1px dotted var(--shade);
    background: repeating-linear-gradient(90deg, var(--shade) 0 1px, transparent 1px 2px) no-repeat 0 8px / 9px 1px;
}

.popup li:first-child::before {
    align-self: flex-end;
    height: 8px;
    background-position: 0 0;
}

.popup li:last-child::before {
    align-self: flex-start;
    height: 9px;
}

.popup li span {
    padding: 0 2px;
    line-height: 16px;
}

.popup .selected {
    color: #fff;
    background: #0a246a;
    outline: 1px dotted #e0c060;
    outline-offset: -1px;
}

.popup-btns {
    display: flex;
    border-top: 2px solid #000;
}

.popup-btns button {
    flex: 1;
    height: 15px;
    background: var(--face);
    border: 1px solid var(--light);
    border-color: var(--light) var(--shade) var(--shade) var(--light);
}

.popup-btns .default {
    border-right: 2px solid #000;
    box-shadow: inset -1px 0 var(--shade);
}

/* Scrollbars */

.vscroll {
    display: flex;
    flex-direction: column;
    flex: none;
    width: 16px;
    background: var(--light);
}

.vscroll > *,
.hscroll > * {
    display: flex;
    flex: none;
    align-items: center;
    justify-content: center;
    background: var(--face);
    border: 1px solid var(--light);
    border-color: var(--light) var(--dark) var(--dark) var(--light);
    box-shadow: inset -1px -1px var(--shade);
}

.vscroll .split {
    height: 6px;
}

.vscroll button {
    height: 16px;
}

.vscroll .thumb {
    flex: 1;
    margin-bottom: 16px;
}

.up::after,
.down::after,
.prev::after,
.next::after {
    content: "";
    border: 4px solid transparent;
}

.up::after {
    border-top: 0;
    border-bottom-color: #000;
}

.down::after {
    border-bottom: 0;
    border-top-color: #000;
}

.prev::after {
    border-left: 0;
    border-right-color: #000;
}

.next::after {
    border-right: 0;
    border-left-color: #000;
}

/* Floating PivotTable toolbar */

.palette {
    position: absolute;
    z-index: 3;
    top: 207px;
    left: 592px;
    width: 389px;
    padding: 3px 3px 2px;
    background: var(--face);
    border: 1px solid #000;
    border-top-color: var(--light);
    border-left-color: var(--light);
    box-shadow: inset -1px -1px var(--shade);
}

.palette-title {
    display: flex;
    align-items: center;
    justify-content: space-between;
    height: 15px;
    padding-right: 1px;
    color: #fff;
    background: #0a246a;
}

.palette-title button {
    display: flex;
    align-items: center;
    justify-content: center;
    width: 11px;
    height: 13px;
    color: #000;
    background: var(--face);
    border: 1px solid var(--light);
}

.palette-title svg {
    width: 7px;
    height: 7px;
}

.palette-tools {
    display: flex;
    align-items: center;
    height: 28px;
    padding-left: 3px;
    border-bottom: 1px solid var(--shade);
}

.palette-body {
    display: flex;
    justify-content: space-between;
    padding: 4px 9px 0 3px;
}

.fields {
    display: grid;
    grid-template-columns: repeat(5, 70px);
    grid-auto-rows: 22px;
    height: 67px;
}

.scroll-arrows {
    display: flex;
    flex-direction: column;
    justify-content: space-between;
    padding: 5px 0 8px;
}

.scroll-arrows svg {
    width: 14px;
    height: 10px;
    fill: var(--shade);
}

/* Sheet tabs */

.tabbar {
    display: flex;
    flex: none;
    height: 17px;
    border-top: 1px solid var(--shade);
    border-bottom: 1px solid var(--light);
    border-left: 2px solid var(--shade);
}

.nav {
    display: flex;
    align-items: center;
    justify-content: center;
    width: 15px;
    border: 1px solid var(--light);
    border-right-color: var(--shade);
    border-bottom-color: var(--shade);
}

.nav svg {
    width: 9px;
    height: 9px;
}

.tabs {
    display: flex;
    flex: 1;
    height: 16px;
}

.tabs button {
    padding: 1px 6px 0 4px;
    white-space: nowrap;
}

.tabs .on {
    padding: 1px 2px 0;
    font-weight: bold;
    background: #fff;
}

.edge {
    flex: none;
    width: 8px;
    height: 15px;
    fill: none;
    stroke: #000;
}

.edge .paper {
    fill: #fff;
    stroke: none;
}

.hscroll {
    display: flex;
    flex: 0 0 39%;
    margin-right: 17px;
    background: var(--light);
}

.hscroll .split {
    width: 5px;
}

.hscroll button {
    width: 15px;
}

.hscroll .thumb {
    flex: 1;
    margin-right: 28px;
}

.toolbar.drawing {
    height: 28px;
}

/* Status bar */

.statusbar {
    display: flex;
    flex: none;
    align-items: center;
    gap: 3px;
    height: 20px;
    padding: 0 4px 0 6px;
    border-top: 1px solid var(--light);
    border-bottom: 1px solid var(--light);
}

.statusbar p {
    flex: 1;
    margin-right: 3px;
    border-right: 1px solid var(--shade);
    font-size: 12px;
    line-height: 18px;
}

.statusbar span {
    height: 15px;
    border: 1px solid var(--shade);
    border-right-color: var(--light);
    border-bottom-color: var(--light);
    font-family: "Liberation Sans", sans-serif;
    font-size: 12px;
    text-align: center;
}

.w23 {
    width: 23px;
}

.w29 {
    width: 29px;
}

.w33 {
    width: 33px;
}

.w129 {
    width: 129px;
}

/* Taskbar */

.taskbar {
    display: flex;
    flex: none;
    align-items: center;
    height: 27px;
    padding: 0 2px;
    border-top: 1px solid var(--light);
}

.taskbar .grip {
    margin: 0 7px 0 6px;
}

.start {
    display: flex;
    align-items: center;
    gap: 1px;
    height: 22px;
    padding: 0 4px;
    font-weight: bold;
    border: 1px solid var(--light);
    border-color: var(--light) var(--dark) var(--dark) var(--light);
    box-shadow: inset -1px -1px var(--shade);
}

.quick {
    display: flex;
    gap: 7px;
    margin-right: 13px;
}

.task {
    display: flex;
    flex: 0 1 160px;
    align-items: center;
    gap: 1px;
    height: 22px;
    margin-right: 3px;
    padding: 0 2px;
    min-width: 0;
    white-space: nowrap;
    border: 1px solid var(--light);
    border-color: var(--light) var(--dark) var(--dark) var(--light);
    box-shadow: inset -1px -1px var(--shade);
}

.task.open {
    font-weight: bold;
    background: var(--light);
    border-color: var(--dark) var(--light) var(--light) var(--dark);
    box-shadow: none;
}

.tray {
    display: flex;
    align-items: center;
    gap: 2px;
    height: 22px;
    margin-left: auto;
    padding: 0 12px 0 3px;
    border: 1px solid var(--shade);
    border-right-color: var(--light);
    border-bottom-color: var(--light);
}

.tray time {
    margin-left: 12px;
}

.lang {
    width: 16px;
    height: 16px;
    line-height: 16px;
    text-align: center;
    color: #fff;
    background: #000080;
}
```

FILE: script.js
```js
const letters = 'ABCDEFGHIJKLMNOPQRSTUVWXYZ';
const rowCount = 60;

const head = document.getElementById('letters');
const body = document.getElementById('rows');
const cols = document.querySelector('colgroup');

for (const letter of letters) {
    const th = document.createElement('th');
    th.textContent = letter;
    if (letter === 'A') th.className = 'current';
    head.appendChild(th);
}

while (cols.children.length <= letters.length) {
    cols.appendChild(document.createElement('col'));
}

// Empty rows below the pivot table
for (let n = body.rows.length + 1; n <= rowCount; n++) {
    const th = document.createElement('th');
    th.textContent = n;
    body.insertRow().appendChild(th);
}

// Pad every row out to the last column
for (const row of body.rows) {
    while (row.cells.length <= letters.length) {
        row.insertCell();
    }
}
```
